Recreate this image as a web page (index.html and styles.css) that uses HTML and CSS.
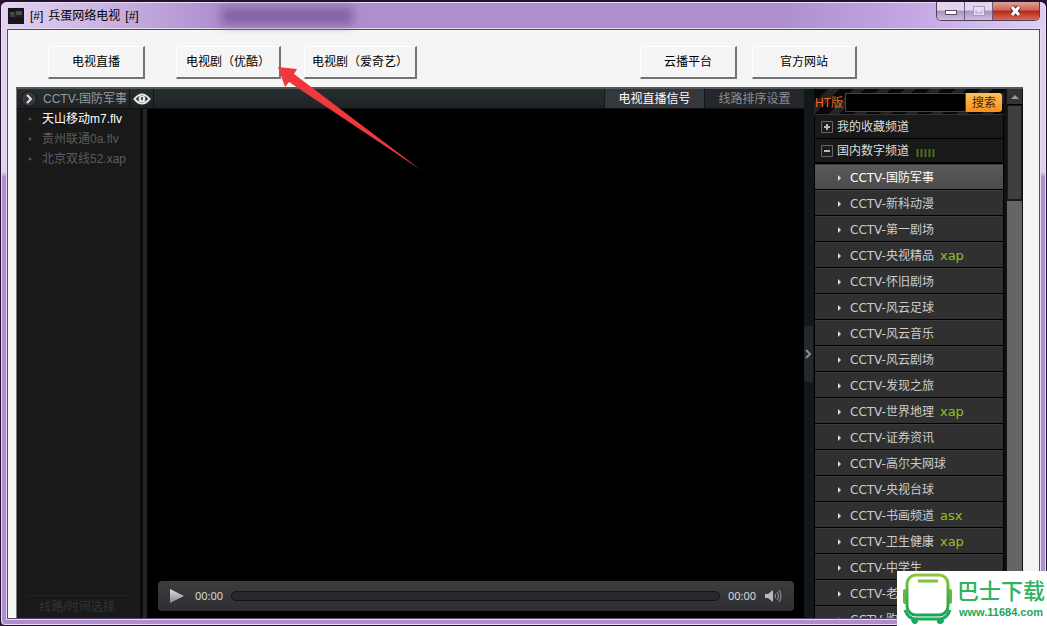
FILE: index.html
```html
<!DOCTYPE html>
<html lang="zh-CN">
<head>
<meta charset="utf-8">
<title>[#] 兵蛋网络电视 [#]</title>
<link rel="stylesheet" href="styles.css">
</head>
<body>
<div class="window">
  <header class="titlebar">
    <svg class="app-icon" width="16" height="16" viewBox="0 0 16 16"><rect width="16" height="16" fill="#15151a"/><path d="M2 4h5v5H2zM8 3h6v4H8z" fill="#4a4a4e"/><path d="M2 8h12M7 3v8" stroke="#29292d"/></svg>
    <h1 class="title"><span>[#]</span> <span>兵蛋网络电视</span> <span>[#]</span></h1>
    <span class="glass-smudge"></span>
    <div class="caption-buttons">
      <button class="caption" aria-label="最小化"><svg width="14" height="10"><rect x="1.500" y="4.500" width="11" height="4" fill="#fff" stroke="#555066"/></svg></button>
      <button class="caption" aria-label="最大化"><svg width="14" height="10"><path d="M2.500 1.500h9v7h-9zM5.500 4.500h3v1h-3z" fill="none" stroke="#e8def4" stroke-width="2"/><path d="M1.500.5h11v9h-11z" fill="none" stroke="#a796be"/></svg></button>
      <button class="caption caption-close" aria-label="关闭"><svg width="14" height="12"><path d="M3 2l7 8M10 2L3 10" stroke="#5c3038" stroke-width="5"/><path d="M3 2l7 8M10 2L3 10" stroke="#fff" stroke-width="3"/></svg></button>
    </div>
  </header>
  <main class="client">
    <nav class="toolbar">
      <button class="tool w-small">电视直播</button>
      <button class="tool w-medium after-wide">电视剧（优酷）</button>
      <button class="tool w-large after-mid">电视剧（爱奇艺）</button>
      <span class="spacer"></span>
      <button class="tool w-small">云播平台</button>
      <button class="tool w-medium after-near">官方网站</button>
    </nav>
    <div class="player">
      <div class="stage">
        <div class="stage-head">
          <svg class="round-arrow" width="16" height="16" viewBox="0 0 16 16"><circle cx="8" cy="8" r="7.500" fill="#35373a" stroke="#15171a"/><path d="M6 4l4 4-4 4" fill="none" stroke="#e8e8e8" stroke-width="2"/></svg>
          <span class="channel-name">CCTV-国防军事</span>
          <button class="eye" aria-label="显示"><svg width="18" height="12" viewBox="0 0 18 12"><path d="M1.500 6Q9-3 16.500 6Q9 15 1.500 6Z" fill="none" stroke="#e4e4e4" stroke-width="2"/><circle cx="9" cy="6" r="3.500" fill="#e4e4e4"/><path d="M9 4v3" stroke="#222" stroke-width="1.500"/></svg></button>
          <span class="spacer"></span>
          <button class="tab tab-on">电视直播信号</button>
          <button class="tab">线路排序设置</button>
        </div>
        <div class="stage-body">
          <aside class="sources">
            <ul class="source-list">
              <li><a class="source source-on" href="#">天山移动m7.flv</a></li>
              <li><a class="source" href="#">贵州联通0a.flv</a></li>
              <li><a class="source" href="#">北京双线52.xap</a></li>
            </ul>
            <p class="source-foot">线路/时间选择</p>
          </aside>
          <div class="divider"></div>
          <section class="video">
            <div class="controls">
              <button class="icon-button" aria-label="播放"><svg width="14" height="14"><defs><linearGradient id="g" x2="0" y2="1"><stop stop-color="#ddd"/><stop offset="1" stop-color="#888"/></linearGradient></defs><path d="M0 0l14 7-14 7z" fill="url(#g)"/></svg></button>
              <span class="time">00:00</span>
              <span class="track"></span>
              <span class="time">00:00</span>
              <button class="icon-button volume" aria-label="音量"><svg width="18" height="14" viewBox="0 0 18 14"><path d="M1 5h3l5-4v12L4 9H1z" fill="#bbb"/><path d="M11 5q1 2 0 4M13 3q3 4 0 8M15 1q4 6 0 12" fill="none" stroke="#8b8b8b" stroke-width="1.200"/></svg></button>
            </div>
          </section>
        </div>
      </div>
      <div class="rail"><button class="collapse" aria-label="收起"><svg width="7" height="10"><path d="M1 1l4 4-4 4" fill="none" stroke="#888f96" stroke-width="2"/></svg></button></div>
      <aside class="channels">
        <form class="search">
          <label class="search-label" for="q">HT版</label>
          <input class="search-box" id="q" type="text">
          <button class="search-go" type="button">搜索</button>
        </form>
        <button class="group"><svg width="12" height="12"><path d="M.5.5h11v11H.5z" fill="#1c1c1c" stroke="#666"/><path d="M3 6h6M6 3v6" stroke="#bbb" stroke-width="2"/></svg>我的收藏频道</button>
        <button class="group"><svg width="12" height="12"><path d="M.5.5h11v11H.5z" fill="#1c1c1c" stroke="#666"/><path d="M3 6h6" stroke="#bbb" stroke-width="2"/></svg>国内数字频道<svg class="bars" width="20" height="8"><path d="M1.500 0v8M5.500 0v8M9.500 0v8M13.500 0v8M17.500 0v8" stroke="#4b6f20" stroke-width="2"/></svg></button>
        <ul class="channel-list">
          <li><a class="channel channel-on" href="#">CCTV-国防军事</a></li>
          <li><a class="channel" href="#">CCTV-新科动漫</a></li>
          <li><a class="channel" href="#">CCTV-第一剧场</a></li>
          <li><a class="channel" href="#">CCTV-央视精品<span class="tag">xap</span></a></li>
          <li><a class="channel" href="#">CCTV-怀旧剧场</a></li>
          <li><a class="channel" href="#">CCTV-风云足球</a></li>
          <li><a class="channel" href="#">CCTV-风云音乐</a></li>
          <li><a class="channel" href="#">CCTV-风云剧场</a></li>
          <li><a class="channel" href="#">CCTV-发现之旅</a></li>
          <li><a class="channel" href="#">CCTV-世界地理<span class="tag">xap</span></a></li>
          <li><a class="channel" href="#">CCTV-证券资讯</a></li>
          <li><a class="channel" href="#">CCTV-高尔夫网球</a></li>
          <li><a class="channel" href="#">CCTV-央视台球</a></li>
          <li><a class="channel" href="#">CCTV-书画频道<span class="tag">asx</span></a></li>
          <li><a class="channel" href="#">CCTV-卫生健康<span class="tag">xap</span></a></li>
          <li><a class="channel" href="#">CCTV-中学生</a></li>
          <li><a class="channel" href="#">CCTV-老故事</a></li>
          <li><a class="channel" href="#">CCTV-购物</a></li>
        </ul>
      </aside>
      <div class="scrollbar">
        <button class="scroll-up" aria-label="向上"><svg width="8" height="4"><path d="M0 4l4-4 4 4z" fill="#999"/></svg></button>
        <div class="scroll-thumb"></div>
      </div>
    </div>
  </main>
  <svg class="pointer" width="146" height="106" viewBox="0 0 146 106"><path d="M2 2L21 4L18 9L145 105L13 17L9 22Z" fill="#f0383c"/></svg>
</div>
<div class="badge">
  <svg class="badge-logo" width="50" height="52" viewBox="0 0 50 52"><defs><linearGradient id="b" x2="0" y2="1"><stop stop-color="#8cc63c"/><stop offset=".6" stop-color="#3fae49"/><stop offset="1" stop-color="#18a85c"/></linearGradient></defs><path d="M8 47h7q0 4-3 4t-4-4zM34 47h7q0 4-4 4t-3-4z" fill="#18a85c"/><rect x="0" y="16" width="4" height="15" rx="2" fill="#6cb53c"/><rect x="45" y="16" width="4" height="15" rx="2" fill="#6cb53c"/><rect x="4" y="2" width="41" height="40" rx="9" fill="#fff" stroke="url(#b)" stroke-width="3"/><path d="M15 8h20" stroke="#83c340" stroke-width="3"/><path d="M2 37q3 9 11 9h23q8 0 11-9" fill="none" stroke="#20a75a" stroke-width="3"/></svg>
  <div class="badge-text"><strong class="badge-name">巴士下载</strong><a class="badge-url" href="#">www.11684.com</a></div>
</div>
</body>
</html>
```
FILE: styles.css
```css
* { box-sizing: border-box; }
body { position: relative; margin: 0; overflow: hidden; background: #2b1638; font: 12px/16px "Liberation Sans", "Noto Sans CJK SC", sans-serif; }
button { margin: 0; padding: 0; border: 0; font: inherit; color: inherit; background: none; display: flex; align-items: center; justify-content: center; }
ul { list-style: none; margin: 0; padding: 0; }
a { text-decoration: none; }
.spacer { flex: 1; }

.window { position: relative; display: flex; flex-direction: column; height: 100vh; padding: 0 6px 6px; border: 1px solid #23122e; border-top-width: 2px; border-radius: 7px 7px 5px 5px; overflow: hidden;
  background: linear-gradient(to bottom, transparent 170px, #ad8fce 175px), linear-gradient(to right, #e2d3f2 0, #ad8fce 220px, #ad8fce 780px, #c4a9e4 920px, #dfd0f2 100%);
  box-shadow: inset 0 0 0 1px #e9dcf5; }
.titlebar { display: flex; align-items: center; gap: 6px; height: 27px; flex: none; padding-left: 1px; }
.title { display: flex; gap: 5px; margin: 0; font-size: 12px; line-height: 16px; font-weight: 400; color: #000; white-space: nowrap; }
.glass-smudge { width: 132px; height: 18px; margin-left: 76px; filter: blur(5px); background: #8465a5; }
.caption-buttons { display: flex; align-self: flex-start; margin-left: auto; height: 19px; border: 1px solid #51405f; border-top: 0; border-radius: 0 0 5px 5px; overflow: hidden; }
.caption { width: 28px; border-right: 1px solid #6b587d; background: linear-gradient(#e2d6ee 0 45%, #a993bf 50%, #cdbce0); }
.caption-close { width: 46px; border-right: 0; background: linear-gradient(#dfa197 0, #cf6256 45%, #b5281c 50%, #d86a50); }

.client { flex: 1; min-height: 0; display: flex; flex-direction: column; padding: 16px 16px 0 8px; border: 1px solid #5a4470; background: #f5f5f5; outline: 1px solid #e6dbf2; }
.toolbar { display: flex; padding: 0 166px 8px 32px; }
.tool { height: 33px; background: #f5f5f5; color: #000; border: 1px solid #fff; border-right: 2px solid #747474; border-bottom: 2px solid #747474; white-space: nowrap; }
.w-small { width: 97px; }
.w-medium { width: 105px; }
.w-large { width: 113px; }
.after-wide { margin-left: 31px; }
.after-mid { margin-left: 23px; }
.after-near { margin-left: 15px; }

.player { flex: 1; min-height: 0; display: flex; border-top: 2px solid #55585a; border-left: 1px solid #777; background: #000; }
.stage { flex: 1; display: flex; flex-direction: column; min-width: 0; }
.stage-head { display: flex; align-items: stretch; height: 20px; flex: none; background: linear-gradient(#292e31, #1e2225); color: #999; border-bottom: 1px solid #111; }
.round-arrow { align-self: center; margin: 0 6px 0 4px; }
.channel-name { font-size: 12px; line-height: 20px; width: 86px; white-space: nowrap; }
.eye { width: 25px; border: 1px solid #111417; border-width: 0 1px; }
.tab { width: 100px; background: #23272b; border-left: 1px solid #15181a; color: #8b8e91; }
.tab-on { background: #34383d; color: #fff; }
.stage-body { flex: 1; min-height: 0; display: flex; }
.sources { width: 124px; display: flex; flex-direction: column; justify-content: space-between; background: #191919; border-right: 1px solid #0d0d0d; }
.source { display: flex; align-items: center; height: 20px; padding-left: 12px; gap: 10px; color: #5c5c5c; white-space: nowrap; }
.source::before { content: ""; border: 2px solid transparent; border-left: 3px solid #555; border-right: 0; }
.source-on { color: #fff; }
.source-foot { margin: 0 10px; padding: 3px 0; width: 100px; font-size: 12px; color: #343434; border-top: 1px solid #242424; text-align: center; white-space: nowrap; }
.divider { width: 6px; background: #252525; border-left: 2px solid #080808; }
.video { flex: 1; display: flex; align-items: flex-end; padding: 0 10px 7px 11px; background: #000; min-width: 0; }
.controls { flex: 1; display: flex; align-items: center; gap: 8px; height: 30px; padding: 0 12px; border-radius: 4px; background: linear-gradient(#3d3d40, #2e2e32); }
.icon-button { flex: none; margin-right: 3px; }
.volume { margin-right: 0; }
.time { font: 11px/16px "Noto Sans", sans-serif; color: #d8d8d8; }
.track { flex: 1; height: 10px; border-radius: 5px; border: 1px solid #151517; background: #29292c; }
.rail { width: 10px; display: flex; align-items: center; background: #11181a; }
.collapse { width: 9px; height: 56px; background: #23282c; border-radius: 4px 0 0 4px; }

.channels { width: 190px; flex: none; overflow: hidden; font-family: "DejaVu Sans", "Noto Sans CJK SC", sans-serif; background: #000; }
.search { display: flex; align-items: center; height: 26px; padding: 2px 2px 0 1px; border-bottom: 1px solid #333; background: repeating-linear-gradient(135deg, #080808 0 9px, #242424 11px 18px); }
.search-label { width: 30px; color: #f26522; font-family: "Liberation Sans", "Noto Sans CJK SC", sans-serif; font-size: 12px; white-space: nowrap; }
.search-box { flex: 1; min-width: 0; height: 19px; padding: 0 4px; border: 1px solid #444; background: #000; color: #ccc; }
.search-go { width: 36px; height: 19px; border-radius: 0 3px 3px 0; color: #4a2500; background: linear-gradient(#ffc35a, #f68f1e); }
.group { width: 188px; height: 24px; margin-left: 1px; padding-left: 6px; justify-content: flex-start; gap: 4px; color: #ddd; background: #191919; border-bottom: 1px solid #000; white-space: nowrap; }
.bars { margin: 4px 0 0 3px; }
.channel-list { margin: 1px 1px 0; }
.channel { display: flex; align-items: center; height: 26px; padding: 2px 0 0 23px; background: #303030; border-bottom: 1px solid #000; box-shadow: inset 0 1px #3b3b3b; color: #ccc; white-space: nowrap; }
.channel::before { content: ""; margin-right: 9px; border: 3px solid transparent; border-left-color: #ddd; border-right: 0; }
.channel-on { background: linear-gradient(#5a5a5a, #4b4b4b); color: #fff; }
.tag { margin-left: 6px; color: #93c01f; font-size: 13px; }
.scrollbar { width: 19px; flex: none; border: 1px solid #111; border-width: 0 1px 0 3px; background: #656467; }
.scroll-up { width: 100%; height: 16px; background: #333; border-bottom: 1px solid #000; }
.scroll-thumb { height: 96px; background: #3f3f3f; border: 1px solid #191919; border-bottom-width: 2px; }

.pointer { position: absolute; left: 275px; top: 63px; }
.badge { position: absolute; right: 0; bottom: 0; display: flex; align-items: center; gap: 4px; width: 150px; height: 55px; padding-left: 6px; background: #fff; }
.badge-logo { flex: none; }
.badge-text { display: flex; flex-direction: column; color: #2fb35f; }
.badge-name { font: 500 22px/26px "Noto Sans CJK SC", sans-serif; white-space: nowrap; }
.badge-url { padding-left: 2px; font: 700 11px/20px "Liberation Sans", sans-serif; color: #1fa653; }
```
